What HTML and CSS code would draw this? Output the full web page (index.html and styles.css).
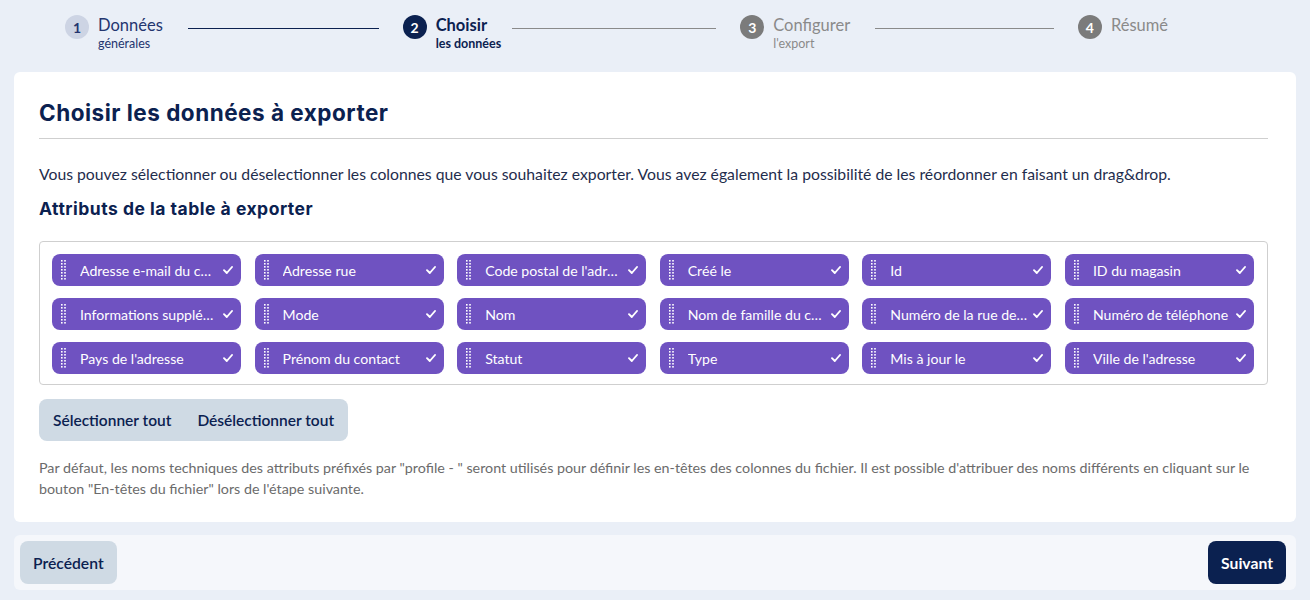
FILE: index.html
```html
<!DOCTYPE html>
<html lang="fr">
<head>
<meta charset="utf-8">
<title>Export - Choisir les données</title>
<link rel="stylesheet" href="styles.css">
</head>
<body>
<nav class="stepper">
  <div class="step step-done">
    <span class="step-num">1</span>
    <div class="step-label">
      <span class="step-title">Données</span>
      <span class="step-sub">générales</span>
    </div>
    <span class="step-line"></span>
  </div>
  <div class="step step-current">
    <span class="step-num">2</span>
    <div class="step-label">
      <span class="step-title">Choisir</span>
      <span class="step-sub">les données</span>
    </div>
    <span class="step-line"></span>
  </div>
  <div class="step step-todo">
    <span class="step-num">3</span>
    <div class="step-label">
      <span class="step-title">Configurer</span>
      <span class="step-sub">l'export</span>
    </div>
    <span class="step-line"></span>
  </div>
  <div class="step step-todo step-last">
    <span class="step-num">4</span>
    <div class="step-label">
      <span class="step-title">Résumé</span>
    </div>
  </div>
</nav>

<main class="card">
  <h1 class="card-title">Choisir les données à exporter</h1>
  <p class="intro">Vous pouvez sélectionner ou déselectionner les colonnes que vous souhaitez exporter. Vous avez également la possibilité de les réordonner en faisant un drag&amp;drop.</p>
  <h2 class="section-title">Attributs de la table à exporter</h2>

  <div class="chips">
    <div class="chip"><svg class="handle" viewBox="0 0 5 20"><g fill="#fff"><rect x="0" y="0" width="1.6" height="1.6"/><rect x="0" y="3" width="1.6" height="1.6"/><rect x="0" y="6" width="1.6" height="1.6"/><rect x="0" y="9" width="1.6" height="1.6"/><rect x="0" y="12" width="1.6" height="1.6"/><rect x="0" y="15" width="1.6" height="1.6"/><rect x="0" y="18" width="1.6" height="1.6"/><rect x="3.2" y="0" width="1.6" height="1.6"/><rect x="3.2" y="3" width="1.6" height="1.6"/><rect x="3.2" y="6" width="1.6" height="1.6"/><rect x="3.2" y="9" width="1.6" height="1.6"/><rect x="3.2" y="12" width="1.6" height="1.6"/><rect x="3.2" y="15" width="1.6" height="1.6"/><rect x="3.2" y="18" width="1.6" height="1.6"/></g></svg><span class="chip-text">Adresse e-mail du contact</span><svg class="check" viewBox="0 0 10 8"><path d="M1 4.2 L3.8 7 L9 1" fill="none" stroke="#fff" stroke-width="1.9" stroke-linecap="round" stroke-linejoin="round"/></svg></div>
    <div class="chip"><svg class="handle" viewBox="0 0 5 20"><g fill="#fff"><rect x="0" y="0" width="1.6" height="1.6"/><rect x="0" y="3" width="1.6" height="1.6"/><rect x="0" y="6" width="1.6" height="1.6"/><rect x="0" y="9" width="1.6" height="1.6"/><rect x="0" y="12" width="1.6" height="1.6"/><rect x="0" y="15" width="1.6" height="1.6"/><rect x="0" y="18" width="1.6" height="1.6"/><rect x="3.2" y="0" width="1.6" height="1.6"/><rect x="3.2" y="3" width="1.6" height="1.6"/><rect x="3.2" y="6" width="1.6" height="1.6"/><rect x="3.2" y="9" width="1.6" height="1.6"/><rect x="3.2" y="12" width="1.6" height="1.6"/><rect x="3.2" y="15" width="1.6" height="1.6"/><rect x="3.2" y="18" width="1.6" height="1.6"/></g></svg><span class="chip-text">Adresse rue</span><svg class="check" viewBox="0 0 10 8"><path d="M1 4.2 L3.8 7 L9 1" fill="none" stroke="#fff" stroke-width="1.9" stroke-linecap="round" stroke-linejoin="round"/></svg></div>
    <div class="chip"><svg class="handle" viewBox="0 0 5 20"><g fill="#fff"><rect x="0" y="0" width="1.6" height="1.6"/><rect x="0" y="3" width="1.6" height="1.6"/><rect x="0" y="6" width="1.6" height="1.6"/><rect x="0" y="9" width="1.6" height="1.6"/><rect x="0" y="12" width="1.6" height="1.6"/><rect x="0" y="15" width="1.6" height="1.6"/><rect x="0" y="18" width="1.6" height="1.6"/><rect x="3.2" y="0" width="1.6" height="1.6"/><rect x="3.2" y="3" width="1.6" height="1.6"/><rect x="3.2" y="6" width="1.6" height="1.6"/><rect x="3.2" y="9" width="1.6" height="1.6"/><rect x="3.2" y="12" width="1.6" height="1.6"/><rect x="3.2" y="15" width="1.6" height="1.6"/><rect x="3.2" y="18" width="1.6" height="1.6"/></g></svg><span class="chip-text">Code postal de l'adresse</span><svg class="check" viewBox="0 0 10 8"><path d="M1 4.2 L3.8 7 L9 1" fill="none" stroke="#fff" stroke-width="1.9" stroke-linecap="round" stroke-linejoin="round"/></svg></div>
    <div class="chip"><svg class="handle" viewBox="0 0 5 20"><g fill="#fff"><rect x="0" y="0" width="1.6" height="1.6"/><rect x="0" y="3" width="1.6" height="1.6"/><rect x="0" y="6" width="1.6" height="1.6"/><rect x="0" y="9" width="1.6" height="1.6"/><rect x="0" y="12" width="1.6" height="1.6"/><rect x="0" y="15" width="1.6" height="1.6"/><rect x="0" y="18" width="1.6" height="1.6"/><rect x="3.2" y="0" width="1.6" height="1.6"/><rect x="3.2" y="3" width="1.6" height="1.6"/><rect x="3.2" y="6" width="1.6" height="1.6"/><rect x="3.2" y="9" width="1.6" height="1.6"/><rect x="3.2" y="12" width="1.6" height="1.6"/><rect x="3.2" y="15" width="1.6" height="1.6"/><rect x="3.2" y="18" width="1.6" height="1.6"/></g></svg><span class="chip-text">Créé le</span><svg class="check" viewBox="0 0 10 8"><path d="M1 4.2 L3.8 7 L9 1" fill="none" stroke="#fff" stroke-width="1.9" stroke-linecap="round" stroke-linejoin="round"/></svg></div>
    <div class="chip"><svg class="handle" viewBox="0 0 5 20"><g fill="#fff"><rect x="0" y="0" width="1.6" height="1.6"/><rect x="0" y="3" width="1.6" height="1.6"/><rect x="0" y="6" width="1.6" height="1.6"/><rect x="0" y="9" width="1.6" height="1.6"/><rect x="0" y="12" width="1.6" height="1.6"/><rect x="0" y="15" width="1.6" height="1.6"/><rect x="0" y="18" width="1.6" height="1.6"/><rect x="3.2" y="0" width="1.6" height="1.6"/><rect x="3.2" y="3" width="1.6" height="1.6"/><rect x="3.2" y="6" width="1.6" height="1.6"/><rect x="3.2" y="9" width="1.6" height="1.6"/><rect x="3.2" y="12" width="1.6" height="1.6"/><rect x="3.2" y="15" width="1.6" height="1.6"/><rect x="3.2" y="18" width="1.6" height="1.6"/></g></svg><span class="chip-text">Id</span><svg class="check" viewBox="0 0 10 8"><path d="M1 4.2 L3.8 7 L9 1" fill="none" stroke="#fff" stroke-width="1.9" stroke-linecap="round" stroke-linejoin="round"/></svg></div>
    <div class="chip"><svg class="handle" viewBox="0 0 5 20"><g fill="#fff"><rect x="0" y="0" width="1.6" height="1.6"/><rect x="0" y="3" width="1.6" height="1.6"/><rect x="0" y="6" width="1.6" height="1.6"/><rect x="0" y="9" width="1.6" height="1.6"/><rect x="0" y="12" width="1.6" height="1.6"/><rect x="0" y="15" width="1.6" height="1.6"/><rect x="0" y="18" width="1.6" height="1.6"/><rect x="3.2" y="0" width="1.6" height="1.6"/><rect x="3.2" y="3" width="1.6" height="1.6"/><rect x="3.2" y="6" width="1.6" height="1.6"/><rect x="3.2" y="9" width="1.6" height="1.6"/><rect x="3.2" y="12" width="1.6" height="1.6"/><rect x="3.2" y="15" width="1.6" height="1.6"/><rect x="3.2" y="18" width="1.6" height="1.6"/></g></svg><span class="chip-text">ID du magasin</span><svg class="check" viewBox="0 0 10 8"><path d="M1 4.2 L3.8 7 L9 1" fill="none" stroke="#fff" stroke-width="1.9" stroke-linecap="round" stroke-linejoin="round"/></svg></div>

    <div class="chip"><svg class="handle" viewBox="0 0 5 20"><g fill="#fff"><rect x="0" y="0" width="1.6" height="1.6"/><rect x="0" y="3" width="1.6" height="1.6"/><rect x="0" y="6" width="1.6" height="1.6"/><rect x="0" y="9" width="1.6" height="1.6"/><rect x="0" y="12" width="1.6" height="1.6"/><rect x="0" y="15" width="1.6" height="1.6"/><rect x="0" y="18" width="1.6" height="1.6"/><rect x="3.2" y="0" width="1.6" height="1.6"/><rect x="3.2" y="3" width="1.6" height="1.6"/><rect x="3.2" y="6" width="1.6" height="1.6"/><rect x="3.2" y="9" width="1.6" height="1.6"/><rect x="3.2" y="12" width="1.6" height="1.6"/><rect x="3.2" y="15" width="1.6" height="1.6"/><rect x="3.2" y="18" width="1.6" height="1.6"/></g></svg><span class="chip-text">Informations supplémentaires</span><svg class="check" viewBox="0 0 10 8"><path d="M1 4.2 L3.8 7 L9 1" fill="none" stroke="#fff" stroke-width="1.9" stroke-linecap="round" stroke-linejoin="round"/></svg></div>
    <div class="chip"><svg class="handle" viewBox="0 0 5 20"><g fill="#fff"><rect x="0" y="0" width="1.6" height="1.6"/><rect x="0" y="3" width="1.6" height="1.6"/><rect x="0" y="6" width="1.6" height="1.6"/><rect x="0" y="9" width="1.6" height="1.6"/><rect x="0" y="12" width="1.6" height="1.6"/><rect x="0" y="15" width="1.6" height="1.6"/><rect x="0" y="18" width="1.6" height="1.6"/><rect x="3.2" y="0" width="1.6" height="1.6"/><rect x="3.2" y="3" width="1.6" height="1.6"/><rect x="3.2" y="6" width="1.6" height="1.6"/><rect x="3.2" y="9" width="1.6" height="1.6"/><rect x="3.2" y="12" width="1.6" height="1.6"/><rect x="3.2" y="15" width="1.6" height="1.6"/><rect x="3.2" y="18" width="1.6" height="1.6"/></g></svg><span class="chip-text">Mode</span><svg class="check" viewBox="0 0 10 8"><path d="M1 4.2 L3.8 7 L9 1" fill="none" stroke="#fff" stroke-width="1.9" stroke-linecap="round" stroke-linejoin="round"/></svg></div>
    <div class="chip"><svg class="handle" viewBox="0 0 5 20"><g fill="#fff"><rect x="0" y="0" width="1.6" height="1.6"/><rect x="0" y="3" width="1.6" height="1.6"/><rect x="0" y="6" width="1.6" height="1.6"/><rect x="0" y="9" width="1.6" height="1.6"/><rect x="0" y="12" width="1.6" height="1.6"/><rect x="0" y="15" width="1.6" height="1.6"/><rect x="0" y="18" width="1.6" height="1.6"/><rect x="3.2" y="0" width="1.6" height="1.6"/><rect x="3.2" y="3" width="1.6" height="1.6"/><rect x="3.2" y="6" width="1.6" height="1.6"/><rect x="3.2" y="9" width="1.6" height="1.6"/><rect x="3.2" y="12" width="1.6" height="1.6"/><rect x="3.2" y="15" width="1.6" height="1.6"/><rect x="3.2" y="18" width="1.6" height="1.6"/></g></svg><span class="chip-text">Nom</span><svg class="check" viewBox="0 0 10 8"><path d="M1 4.2 L3.8 7 L9 1" fill="none" stroke="#fff" stroke-width="1.9" stroke-linecap="round" stroke-linejoin="round"/></svg></div>
    <div class="chip"><svg class="handle" viewBox="0 0 5 20"><g fill="#fff"><rect x="0" y="0" width="1.6" height="1.6"/><rect x="0" y="3" width="1.6" height="1.6"/><rect x="0" y="6" width="1.6" height="1.6"/><rect x="0" y="9" width="1.6" height="1.6"/><rect x="0" y="12" width="1.6" height="1.6"/><rect x="0" y="15" width="1.6" height="1.6"/><rect x="0" y="18" width="1.6" height="1.6"/><rect x="3.2" y="0" width="1.6" height="1.6"/><rect x="3.2" y="3" width="1.6" height="1.6"/><rect x="3.2" y="6" width="1.6" height="1.6"/><rect x="3.2" y="9" width="1.6" height="1.6"/><rect x="3.2" y="12" width="1.6" height="1.6"/><rect x="3.2" y="15" width="1.6" height="1.6"/><rect x="3.2" y="18" width="1.6" height="1.6"/></g></svg><span class="chip-text">Nom de famille du contact</span><svg class="check" viewBox="0 0 10 8"><path d="M1 4.2 L3.8 7 L9 1" fill="none" stroke="#fff" stroke-width="1.9" stroke-linecap="round" stroke-linejoin="round"/></svg></div>
    <div class="chip"><svg class="handle" viewBox="0 0 5 20"><g fill="#fff"><rect x="0" y="0" width="1.6" height="1.6"/><rect x="0" y="3" width="1.6" height="1.6"/><rect x="0" y="6" width="1.6" height="1.6"/><rect x="0" y="9" width="1.6" height="1.6"/><rect x="0" y="12" width="1.6" height="1.6"/><rect x="0" y="15" width="1.6" height="1.6"/><rect x="0" y="18" width="1.6" height="1.6"/><rect x="3.2" y="0" width="1.6" height="1.6"/><rect x="3.2" y="3" width="1.6" height="1.6"/><rect x="3.2" y="6" width="1.6" height="1.6"/><rect x="3.2" y="9" width="1.6" height="1.6"/><rect x="3.2" y="12" width="1.6" height="1.6"/><rect x="3.2" y="15" width="1.6" height="1.6"/><rect x="3.2" y="18" width="1.6" height="1.6"/></g></svg><span class="chip-text">Numéro de la rue de l'adresse</span><svg class="check" viewBox="0 0 10 8"><path d="M1 4.2 L3.8 7 L9 1" fill="none" stroke="#fff" stroke-width="1.9" stroke-linecap="round" stroke-linejoin="round"/></svg></div>
    <div class="chip"><svg class="handle" viewBox="0 0 5 20"><g fill="#fff"><rect x="0" y="0" width="1.6" height="1.6"/><rect x="0" y="3" width="1.6" height="1.6"/><rect x="0" y="6" width="1.6" height="1.6"/><rect x="0" y="9" width="1.6" height="1.6"/><rect x="0" y="12" width="1.6" height="1.6"/><rect x="0" y="15" width="1.6" height="1.6"/><rect x="0" y="18" width="1.6" height="1.6"/><rect x="3.2" y="0" width="1.6" height="1.6"/><rect x="3.2" y="3" width="1.6" height="1.6"/><rect x="3.2" y="6" width="1.6" height="1.6"/><rect x="3.2" y="9" width="1.6" height="1.6"/><rect x="3.2" y="12" width="1.6" height="1.6"/><rect x="3.2" y="15" width="1.6" height="1.6"/><rect x="3.2" y="18" width="1.6" height="1.6"/></g></svg><span class="chip-text">Numéro de téléphone</span><svg class="check" viewBox="0 0 10 8"><path d="M1 4.2 L3.8 7 L9 1" fill="none" stroke="#fff" stroke-width="1.9" stroke-linecap="round" stroke-linejoin="round"/></svg></div>

    <div class="chip"><svg class="handle" viewBox="0 0 5 20"><g fill="#fff"><rect x="0" y="0" width="1.6" height="1.6"/><rect x="0" y="3" width="1.6" height="1.6"/><rect x="0" y="6" width="1.6" height="1.6"/><rect x="0" y="9" width="1.6" height="1.6"/><rect x="0" y="12" width="1.6" height="1.6"/><rect x="0" y="15" width="1.6" height="1.6"/><rect x="0" y="18" width="1.6" height="1.6"/><rect x="3.2" y="0" width="1.6" height="1.6"/><rect x="3.2" y="3" width="1.6" height="1.6"/><rect x="3.2" y="6" width="1.6" height="1.6"/><rect x="3.2" y="9" width="1.6" height="1.6"/><rect x="3.2" y="12" width="1.6" height="1.6"/><rect x="3.2" y="15" width="1.6" height="1.6"/><rect x="3.2" y="18" width="1.6" height="1.6"/></g></svg><span class="chip-text">Pays de l'adresse</span><svg class="check" viewBox="0 0 10 8"><path d="M1 4.2 L3.8 7 L9 1" fill="none" stroke="#fff" stroke-width="1.9" stroke-linecap="round" stroke-linejoin="round"/></svg></div>
    <div class="chip"><svg class="handle" viewBox="0 0 5 20"><g fill="#fff"><rect x="0" y="0" width="1.6" height="1.6"/><rect x="0" y="3" width="1.6" height="1.6"/><rect x="0" y="6" width="1.6" height="1.6"/><rect x="0" y="9" width="1.6" height="1.6"/><rect x="0" y="12" width="1.6" height="1.6"/><rect x="0" y="15" width="1.6" height="1.6"/><rect x="0" y="18" width="1.6" height="1.6"/><rect x="3.2" y="0" width="1.6" height="1.6"/><rect x="3.2" y="3" width="1.6" height="1.6"/><rect x="3.2" y="6" width="1.6" height="1.6"/><rect x="3.2" y="9" width="1.6" height="1.6"/><rect x="3.2" y="12" width="1.6" height="1.6"/><rect x="3.2" y="15" width="1.6" height="1.6"/><rect x="3.2" y="18" width="1.6" height="1.6"/></g></svg><span class="chip-text">Prénom du contact</span><svg class="check" viewBox="0 0 10 8"><path d="M1 4.2 L3.8 7 L9 1" fill="none" stroke="#fff" stroke-width="1.9" stroke-linecap="round" stroke-linejoin="round"/></svg></div>
    <div class="chip"><svg class="handle" viewBox="0 0 5 20"><g fill="#fff"><rect x="0" y="0" width="1.6" height="1.6"/><rect x="0" y="3" width="1.6" height="1.6"/><rect x="0" y="6" width="1.6" height="1.6"/><rect x="0" y="9" width="1.6" height="1.6"/><rect x="0" y="12" width="1.6" height="1.6"/><rect x="0" y="15" width="1.6" height="1.6"/><rect x="0" y="18" width="1.6" height="1.6"/><rect x="3.2" y="0" width="1.6" height="1.6"/><rect x="3.2" y="3" width="1.6" height="1.6"/><rect x="3.2" y="6" width="1.6" height="1.6"/><rect x="3.2" y="9" width="1.6" height="1.6"/><rect x="3.2" y="12" width="1.6" height="1.6"/><rect x="3.2" y="15" width="1.6" height="1.6"/><rect x="3.2" y="18" width="1.6" height="1.6"/></g></svg><span class="chip-text">Statut</span><svg class="check" viewBox="0 0 10 8"><path d="M1 4.2 L3.8 7 L9 1" fill="none" stroke="#fff" stroke-width="1.9" stroke-linecap="round" stroke-linejoin="round"/></svg></div>
    <div class="chip"><svg class="handle" viewBox="0 0 5 20"><g fill="#fff"><rect x="0" y="0" width="1.6" height="1.6"/><rect x="0" y="3" width="1.6" height="1.6"/><rect x="0" y="6" width="1.6" height="1.6"/><rect x="0" y="9" width="1.6" height="1.6"/><rect x="0" y="12" width="1.6" height="1.6"/><rect x="0" y="15" width="1.6" height="1.6"/><rect x="0" y="18" width="1.6" height="1.6"/><rect x="3.2" y="0" width="1.6" height="1.6"/><rect x="3.2" y="3" width="1.6" height="1.6"/><rect x="3.2" y="6" width="1.6" height="1.6"/><rect x="3.2" y="9" width="1.6" height="1.6"/><rect x="3.2" y="12" width="1.6" height="1.6"/><rect x="3.2" y="15" width="1.6" height="1.6"/><rect x="3.2" y="18" width="1.6" height="1.6"/></g></svg><span class="chip-text">Type</span><svg class="check" viewBox="0 0 10 8"><path d="M1 4.2 L3.8 7 L9 1" fill="none" stroke="#fff" stroke-width="1.9" stroke-linecap="round" stroke-linejoin="round"/></svg></div>
    <div class="chip"><svg class="handle" viewBox="0 0 5 20"><g fill="#fff"><rect x="0" y="0" width="1.6" height="1.6"/><rect x="0" y="3" width="1.6" height="1.6"/><rect x="0" y="6" width="1.6" height="1.6"/><rect x="0" y="9" width="1.6" height="1.6"/><rect x="0" y="12" width="1.6" height="1.6"/><rect x="0" y="15" width="1.6" height="1.6"/><rect x="0" y="18" width="1.6" height="1.6"/><rect x="3.2" y="0" width="1.6" height="1.6"/><rect x="3.2" y="3" width="1.6" height="1.6"/><rect x="3.2" y="6" width="1.6" height="1.6"/><rect x="3.2" y="9" width="1.6" height="1.6"/><rect x="3.2" y="12" width="1.6" height="1.6"/><rect x="3.2" y="15" width="1.6" height="1.6"/><rect x="3.2" y="18" width="1.6" height="1.6"/></g></svg><span class="chip-text">Mis à jour le</span><svg class="check" viewBox="0 0 10 8"><path d="M1 4.2 L3.8 7 L9 1" fill="none" stroke="#fff" stroke-width="1.9" stroke-linecap="round" stroke-linejoin="round"/></svg></div>
    <div class="chip"><svg class="handle" viewBox="0 0 5 20"><g fill="#fff"><rect x="0" y="0" width="1.6" height="1.6"/><rect x="0" y="3" width="1.6" height="1.6"/><rect x="0" y="6" width="1.6" height="1.6"/><rect x="0" y="9" width="1.6" height="1.6"/><rect x="0" y="12" width="1.6" height="1.6"/><rect x="0" y="15" width="1.6" height="1.6"/><rect x="0" y="18" width="1.6" height="1.6"/><rect x="3.2" y="0" width="1.6" height="1.6"/><rect x="3.2" y="3" width="1.6" height="1.6"/><rect x="3.2" y="6" width="1.6" height="1.6"/><rect x="3.2" y="9" width="1.6" height="1.6"/><rect x="3.2" y="12" width="1.6" height="1.6"/><rect x="3.2" y="15" width="1.6" height="1.6"/><rect x="3.2" y="18" width="1.6" height="1.6"/></g></svg><span class="chip-text">Ville de l'adresse</span><svg class="check" viewBox="0 0 10 8"><path d="M1 4.2 L3.8 7 L9 1" fill="none" stroke="#fff" stroke-width="1.9" stroke-linecap="round" stroke-linejoin="round"/></svg></div>
  </div>

  <div class="select-group">
    <button class="select-btn" type="button">Sélectionner tout</button>
    <button class="select-btn" type="button">Désélectionner tout</button>
  </div>

  <p class="note">Par défaut, les noms techniques des attributs préfixés par "profile - " seront utilisés pour définir les en-têtes des colonnes du fichier. Il est possible d'attribuer des noms différents en cliquant sur le bouton "En-têtes du fichier" lors de l'étape suivante.</p>
</main>

<footer class="footer">
  <button class="btn btn-secondary" type="button">Précédent</button>
  <button class="btn btn-primary" type="button">Suivant</button>
</footer>
</body>
</html>
```

FILE: styles.css
```css
* {
  box-sizing: border-box;
}

body {
  margin: 0;
  background: #eaeff7;
  font-family: "Lato", "Open Sans", sans-serif;
  color: #0b2150;
  height: 600px;
  overflow: hidden;
}

/* Stepper */
.stepper {
  display: flex;
  align-items: flex-start;
  width: 1168px;
  height: 72px;
  padding: 15px 0 0 65px;
}

.step {
  display: flex;
  align-items: flex-start;
  flex: 1 1 0;
  min-width: 0;
}

.step-last {
  flex: none;
}

.step-num {
  flex: none;
  width: 24px;
  height: 24px;
  border-radius: 50%;
  display: flex;
  align-items: center;
  justify-content: center;
  font-size: 14px;
  font-weight: 700;
  margin-right: 9px;
}

.step-label {
  display: flex;
  flex-direction: column;
}

.step-title {
  font-size: 16.5px;
  line-height: 20px;
  white-space: nowrap;
}

.step-sub {
  font-size: 12.5px;
  line-height: 16px;
  white-space: nowrap;
  width: 0;
  margin-top: 1px;
}

.step-line {
  flex: 1;
  height: 1px;
  margin: 13px 24px 0 25px;
  background: #8a8a8a;
}

.step-done .step-num {
  background: #cdd4e4;
  color: #24356f;
}

.step-done .step-title,
.step-done .step-sub {
  color: #24356f;
}

.step-done .step-line {
  background: #0b2150;
}

.step-current .step-num {
  background: #0b2150;
  color: #fff;
}

.step-current .step-title,
.step-current .step-sub {
  color: #0b2150;
  font-weight: 700;
}

.step-todo .step-num {
  background: #7b7b7b;
  color: #fff;
}

.step-todo .step-title,
.step-todo .step-sub {
  color: #8a8a8a;
}

/* Card */
.card {
  margin: 0 14px;
  background: #fff;
  border-radius: 6px;
  padding: 24px 28px 23px 25px;
}

.card-title {
  margin: 0;
  font-family: "Inter", "Lato", sans-serif;
  font-weight: 700;
  font-size: 22.5px;
  letter-spacing: 0.5px;
  line-height: 34px;
  padding-bottom: 8px;
  border-bottom: 1px solid #cfcfcf;
  color: #0b2150;
}

.intro {
  margin: 24px 0 0;
  font-size: 15.75px;
  line-height: 22px;
  color: #1f2d4d;
}

.section-title {
  margin: 12px 0 0;
  font-family: "Inter", "Lato", sans-serif;
  font-weight: 700;
  font-size: 17.5px;
  letter-spacing: 0.5px;
  line-height: 24px;
  color: #0b2150;
}

.chips {
  margin-top: 20px;
  border: 1px solid #cfcfcf;
  border-radius: 4px;
  padding: 12px 13px 10px 12px;
  display: grid;
  grid-template-columns: repeat(6, 1fr);
  column-gap: 13.5px;
  row-gap: 12px;
}

.chip {
  display: flex;
  align-items: center;
  height: 32px;
  background: #6f52c1;
  color: #fff;
  border-radius: 8px;
  padding: 0 8px 0 9px;
  min-width: 0;
}

.handle {
  flex: none;
  width: 5px;
  height: 20px;
}

.chip-text {
  flex: 1;
  min-width: 0;
  margin-left: 14px;
  font-size: 14.1px;
  white-space: nowrap;
  overflow: hidden;
  text-overflow: ellipsis;
}

.check {
  flex: none;
  width: 10px;
  height: 8px;
  margin-left: 5px;
}

.select-group {
  display: inline-flex;
  margin-top: 14px;
  background: #cfdae4;
  border-radius: 8px;
  padding: 0 1px;
}

.select-btn {
  border: 0;
  background: transparent;
  height: 42px;
  padding: 0 13px;
  font-family: "Lato", "Open Sans", sans-serif;
  font-size: 15.5px;
  font-weight: 600;
  color: #0b2150;
}

.note {
  margin: 16px 0 0;
  font-size: 14.3px;
  line-height: 21px;
  color: #6b6b6b;
}

/* Footer */
.footer {
  margin: 13px 14px 0;
  height: 55px;
  background: #f5f7fb;
  border-radius: 6px;
  padding: 6px 10px 6px 6px;
  display: flex;
  justify-content: space-between;
  align-items: center;
}

.btn {
  border: 0;
  height: 43px;
  border-radius: 8px;
  padding: 0 13px;
  font-family: "Lato", "Open Sans", sans-serif;
  font-size: 15.7px;
  font-weight: 600;
}

.btn-secondary {
  background: #cfdae4;
  color: #0b2150;
}

.btn-primary {
  background: #0b2150;
  color: #fff;
  font-weight: 700;
}
```
